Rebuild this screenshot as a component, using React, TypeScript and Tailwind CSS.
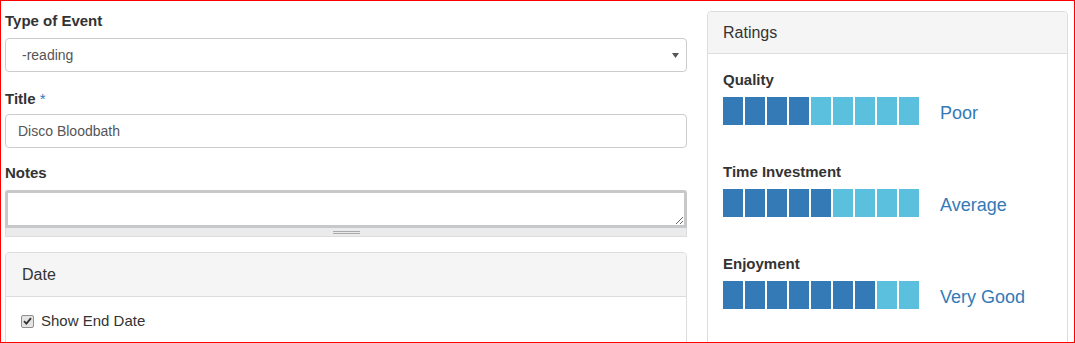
import React from "react";

const font = { fontFamily: '"Liberation Sans", Arial, Helvetica, sans-serif' };

interface Rating {
  name: string;
  score: number;
  label: string;
}

const ratings: Rating[] = [
  { name: "Quality", score: 4, label: "Poor" },
  { name: "Time Investment", score: 5, label: "Average" },
  { name: "Enjoyment", score: 7, label: "Very Good" },
];

function RatingBar({ score }: { score: number }) {
  return (
    <div className="flex gap-[2px]">
      {Array.from({ length: 9 }).map((_, i) => (
        <div
          key={i}
          className={`w-[20px] h-[28px] ${i < score ? "bg-[#337ab7]" : "bg-[#5bc0de]"}`}
        />
      ))}
    </div>
  );
}

export default function App() {
  return (
    <div
      style={font}
      className="w-[1075px] h-[343px] border border-[#ff0000] bg-white overflow-hidden flex items-start text-[#333]"
    >
      {/* Left column: event form */}
      <div className="w-[682px] ml-[4px] pt-[10px] shrink-0">
        <div className="text-[15px] font-bold leading-[20px] mb-[7px]">Type of Event</div>
        <div className="h-[34px] border border-[#ccc] rounded-[4px] flex items-center justify-between pl-[16px] pr-[7px] text-[14px] text-[#555]">
          <span>-reading</span>
          <svg width="7" height="5" viewBox="0 0 7 5">
            <path d="M0 0H7L3.5 5Z" fill="#555" />
          </svg>
        </div>

        <div className="text-[15px] font-bold leading-[20px] mt-[17px] mb-[5px]">
          Title <span className="text-[#337ab7] font-normal">*</span>
        </div>
        <div className="h-[34px] border border-[#ccc] rounded-[4px] flex items-center pl-[12px] text-[14px] text-[#555]">
          Disco Bloodbath
        </div>

        <div className="text-[15px] font-bold leading-[20px] mt-[15px] mb-[7px]">Notes</div>
        <div>
          <textarea className="block h-[38px] w-full border-[3px] border-[#c6c8ca] rounded-t-[3px] bg-white outline-none" />
          <div className="h-[9px] bg-[#ebebeb] border border-t-0 border-[#ddd] flex flex-col items-center justify-center gap-[1px]">
            <div className="w-[27px] h-px bg-[#aaa]" />
            <div className="w-[27px] h-px bg-[#aaa]" />
          </div>
        </div>

        <div className="mt-[15px] border border-[#ddd] rounded-[4px]">
          <div className="h-[44px] bg-[#f5f5f5] border-b border-[#ddd] rounded-t-[4px] flex items-center px-[16px] text-[16px]">
            Date
          </div>
          <div className="pl-[15px] pr-[16px] pt-[14px] pb-[14px] flex items-center gap-[7px]">
            <span className="w-[13px] h-[13px] border border-[#8f8f8f] rounded-[2px] bg-[#e4e4e4] flex items-center justify-center">
              <svg width="9" height="8" viewBox="0 0 9 8">
                <path d="M1 4.2L3.4 6.6L8 1.2" stroke="#333" strokeWidth="1.8" fill="none" />
              </svg>
            </span>
            <span className="text-[15px] leading-[20px]">Show End Date</span>
          </div>
        </div>
      </div>

      {/* Right column: ratings */}
      <div className="w-[361px] ml-[20px] pt-[10px] shrink-0">
        <div className="border border-[#ddd] rounded-[4px] h-[400px]">
          <div className="h-[42px] bg-[#f5f5f5] border-b border-[#ddd] rounded-t-[4px] flex items-center px-[15px] text-[16px]">
            Ratings
          </div>
          <div className="px-[15px] pt-[16px]">
            {ratings.map((r) => (
              <div key={r.name} className="mb-[37px]">
                <div className="text-[15px] font-bold leading-[20px] mb-[7px]">{r.name}</div>
                <div className="flex items-start h-[28px]">
                  <RatingBar score={r.score} />
                  <span className="ml-[21px] text-[18px] text-[#337ab7] leading-[24px] pt-[4px]">
                    {r.label}
                  </span>
                </div>
              </div>
            ))}
          </div>
        </div>
      </div>
    </div>
  );
}
